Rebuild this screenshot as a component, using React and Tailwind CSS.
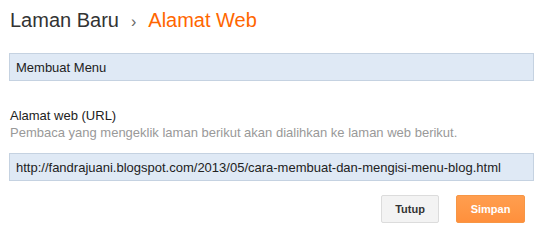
export default function App() {
  return (
    <div className="w-[543px] h-[236px] bg-white px-[9px] font-['Liberation_Sans',Arial,sans-serif] text-[#333]">
      <h1 className="mt-[8px] flex items-baseline text-[20px] leading-[24px] font-normal pl-[1px]">
        <span className="text-[#333]">Laman Baru</span>
        <span className="mx-[12px] text-[#666] text-[16px]">›</span>
        <span className="text-[#ff6600]">Alamat Web</span>
      </h1>
      <input
        readOnly
        value="Membuat Menu"
        className="mt-[19px] block w-full h-[28px] border border-[#c5d2e1] bg-[#dfe9f5] px-[6px] text-[13px] text-[#222] outline-none font-['Liberation_Sans',Arial,sans-serif]"
      />
      <div className="mt-[26px] pl-[1px]">
        <div className="text-[13px] leading-[17px] text-[#222]">Alamat web (URL)</div>
        <div className="text-[13px] leading-[17px] text-[#999]">
          Pembaca yang mengeklik laman berikut akan dialihkan ke laman web berikut.
        </div>
      </div>
      <input
        readOnly
        value="http://fandrajuani.blogspot.com/2013/05/cara-membuat-dan-mengisi-menu-blog.html"
        className="mt-[12px] block w-full h-[28px] border border-[#c5d2e1] bg-[#dfe9f5] px-[6px] text-[13px] text-[#222] outline-none font-['Liberation_Sans',Arial,sans-serif]"
      />
      <div className="mt-[14px] flex justify-end gap-[17px] pr-[9px]">
        <button className="h-[28px] w-[58px] border border-[#dcdcdc] bg-[#f3f3f3] text-[11px] font-bold text-[#333] rounded-[2px]">
          Tutup
        </button>
        <button className="h-[28px] w-[69px] border border-[#f79645] bg-gradient-to-b from-[#ff9e4f] to-[#ff903c] text-[11px] font-bold text-white rounded-[2px]">
          Simpan
        </button>
      </div>
    </div>
  );
}
